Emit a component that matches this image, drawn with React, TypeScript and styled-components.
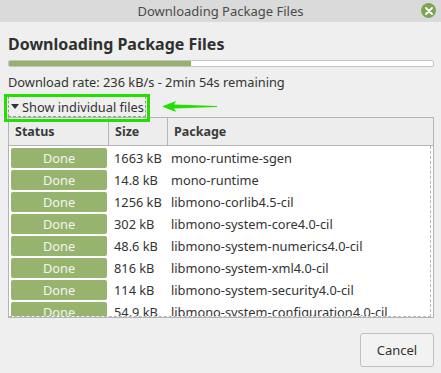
import styled, { createGlobalStyle } from "styled-components";

const GlobalStyle = createGlobalStyle`
  html, body {
    margin: 0;
    padding: 0;
    background: #efefef;
  }
  body {
    font-family: "Noto Sans", "DejaVu Sans", sans-serif;
    color: #3c3c3c;
  }
`;

type Row = { size: string; name: string };

const rows: Row[] = [
  { size: "1663 kB", name: "mono-runtime-sgen" },
  { size: "14.8 kB", name: "mono-runtime" },
  { size: "1256 kB", name: "libmono-corlib4.5-cil" },
  { size: "302 kB", name: "libmono-system-core4.0-cil" },
  { size: "48.6 kB", name: "libmono-system-numerics4.0-cil" },
  { size: "816 kB", name: "libmono-system-xml4.0-cil" },
  { size: "114 kB", name: "libmono-system-security4.0-cil" },
  { size: "54.9 kB", name: "libmono-system-configuration4.0-cil" },
];

const progress = 43;

function App() {
  return (
    <>
      <GlobalStyle />
      <Window>
        <TitleBar>
          <TitleText>Downloading Package Files</TitleText>
          <CloseButton>
            <svg width="8" height="8" viewBox="0 0 8 8">
              <path d="M1 1L7 7M7 1L1 7" stroke="#fff" strokeWidth="1.8" strokeLinecap="round" />
            </svg>
          </CloseButton>
        </TitleBar>
        <Body>
          <Heading>Downloading Package Files</Heading>
          <ProgressTrack>
            <ProgressFill style={{ width: `${progress}%` }} />
          </ProgressTrack>
          <Rate>Download rate: 236 kB/s - 2min 54s remaining</Rate>
          <ExpanderRow>
            <Expander>
              <Triangle />
              Show individual files
            </Expander>
            <Highlight />
            <Arrow width="55" height="11" viewBox="0 0 55 11">
              <path d="M0 5.5L14 0L12 3.6L55 5L55 6L12 7.4L14 11Z" fill="#22e000" />
            </Arrow>
          </ExpanderRow>
          <Table>
            <HeaderRow>
              <HeaderCell $w={100}>Status</HeaderCell>
              <HeaderCell $w={59}>Size</HeaderCell>
              <HeaderCell $last>Package</HeaderCell>
            </HeaderRow>
            <List>
              {rows.map((r) => (
                <FileRow key={r.name}>
                  <DoneBadge>Done</DoneBadge>
                  <SizeCell>{r.size}</SizeCell>
                  <NameCell>{r.name}</NameCell>
                </FileRow>
              ))}
            </List>
          </Table>
          <Footer>
            <Button>Cancel</Button>
          </Footer>
        </Body>
      </Window>
    </>
  );
}

export default App;

const Window = styled.div`
  width: 441px;
  height: 373px;
  display: flex;
  flex-direction: column;
  overflow: hidden;
`;

const TitleBar = styled.div`
  height: 22px;
  background: #dadada;
  display: flex;
  align-items: center;
  justify-content: center;
  position: relative;
`;

const TitleText = styled.div`
  font-size: 13px;
  color: #4a4a4a;
`;

const CloseButton = styled.div`
  position: absolute;
  right: 5px;
  top: 3px;
  width: 15px;
  height: 15px;
  border-radius: 50%;
  background: #7da455;
  display: flex;
  align-items: center;
  justify-content: center;
`;

const Body = styled.div`
  flex: 1;
  display: flex;
  flex-direction: column;
  padding: 0 7px 0 8px;
`;

const Heading = styled.div`
  font-size: 16px;
  font-weight: bold;
  color: #303030;
  margin-top: 10px;
  line-height: 24px;
`;

const ProgressTrack = styled.div`
  margin-top: 4px;
  height: 5px;
  border: 1px solid #c4c4c4;
  border-radius: 2px;
  background: #ffffff;
  overflow: hidden;
`;

const ProgressFill = styled.div`
  height: 100%;
  background: #94b26c;
`;

const Rate = styled.div`
  margin-top: 6px;
  font-size: 12.8px;
  line-height: 18px;
  color: #333;
`;

const ExpanderRow = styled.div`
  position: relative;
  margin-top: 5px;
  height: 21px;
  display: flex;
  align-items: center;
`;

const Expander = styled.div`
  display: flex;
  align-items: center;
  gap: 2px;
  height: 19px;
  padding: 0 1px 0 2px;
  border: 1px dashed #9a9a9a;
  font-size: 12.8px;
  color: #333;
`;

const Triangle = styled.span`
  width: 0;
  height: 0;
  border-left: 4.5px solid transparent;
  border-right: 4.5px solid transparent;
  border-top: 5px solid #333;
  margin-right: 1px;
`;

const Highlight = styled.div`
  position: absolute;
  left: -4px;
  top: -2px;
  width: 140px;
  height: 22px;
  border: 3px solid #22e000;
`;

const Arrow = styled.svg`
  position: absolute;
  left: 154px;
  top: 5px;
`;

const Table = styled.div`
  height: 199px;
  border: 1px solid #b4b4b4;
  display: flex;
  flex-direction: column;
  overflow: hidden;
  background: #fff;
`;

const HeaderRow = styled.div`
  height: 27px;
  display: flex;
  background: #ededed;
  border-bottom: 1px solid #b4b4b4;
  flex-shrink: 0;
`;

const HeaderCell = styled.div<{ $w?: number; $last?: boolean }>`
  width: ${(p) => (p.$w ? `${p.$w}px` : "auto")};
  flex: ${(p) => (p.$last ? 1 : "none")};
  border-right: ${(p) => (p.$last ? "none" : "1px solid #b4b4b4")};
  padding-left: 6px;
  box-sizing: border-box;
  display: flex;
  align-items: center;
  font-size: 12.5px;
  font-weight: bold;
  color: #3a3a3a;
`;

const List = styled.div`
  flex: 1;
  padding-top: 1px;
  border-right: 1px dashed #b8b8b8;
  border-bottom: 1px dashed #b8b8b8;
  margin-right: 2px;
  overflow: hidden;
`;

const FileRow = styled.div`
  height: 22px;
  display: flex;
  align-items: center;
  font-size: 12.8px;
  color: #333;
`;

const DoneBadge = styled.div`
  margin-left: 2px;
  width: 96px;
  height: 20px;
  border-radius: 2px;
  background: #97b46f;
  color: #f4f6ef;
  display: flex;
  align-items: center;
  justify-content: center;
  flex-shrink: 0;
`;

const SizeCell = styled.div`
  width: 59px;
  padding-left: 7px;
  box-sizing: border-box;
  flex-shrink: 0;
`;

const NameCell = styled.div`
  padding-left: 5px;
  white-space: nowrap;
`;

const Footer = styled.div`
  flex: 1;
  display: flex;
  justify-content: flex-end;
  align-items: flex-end;
  padding-bottom: 6px;
`;

const Button = styled.div`
  width: 72px;
  height: 32px;
  border: 1px solid #c0c0c0;
  border-radius: 3px;
  background: #f2f2f2;
  display: flex;
  align-items: center;
  justify-content: center;
  font-size: 13px;
  color: #333;
`;
